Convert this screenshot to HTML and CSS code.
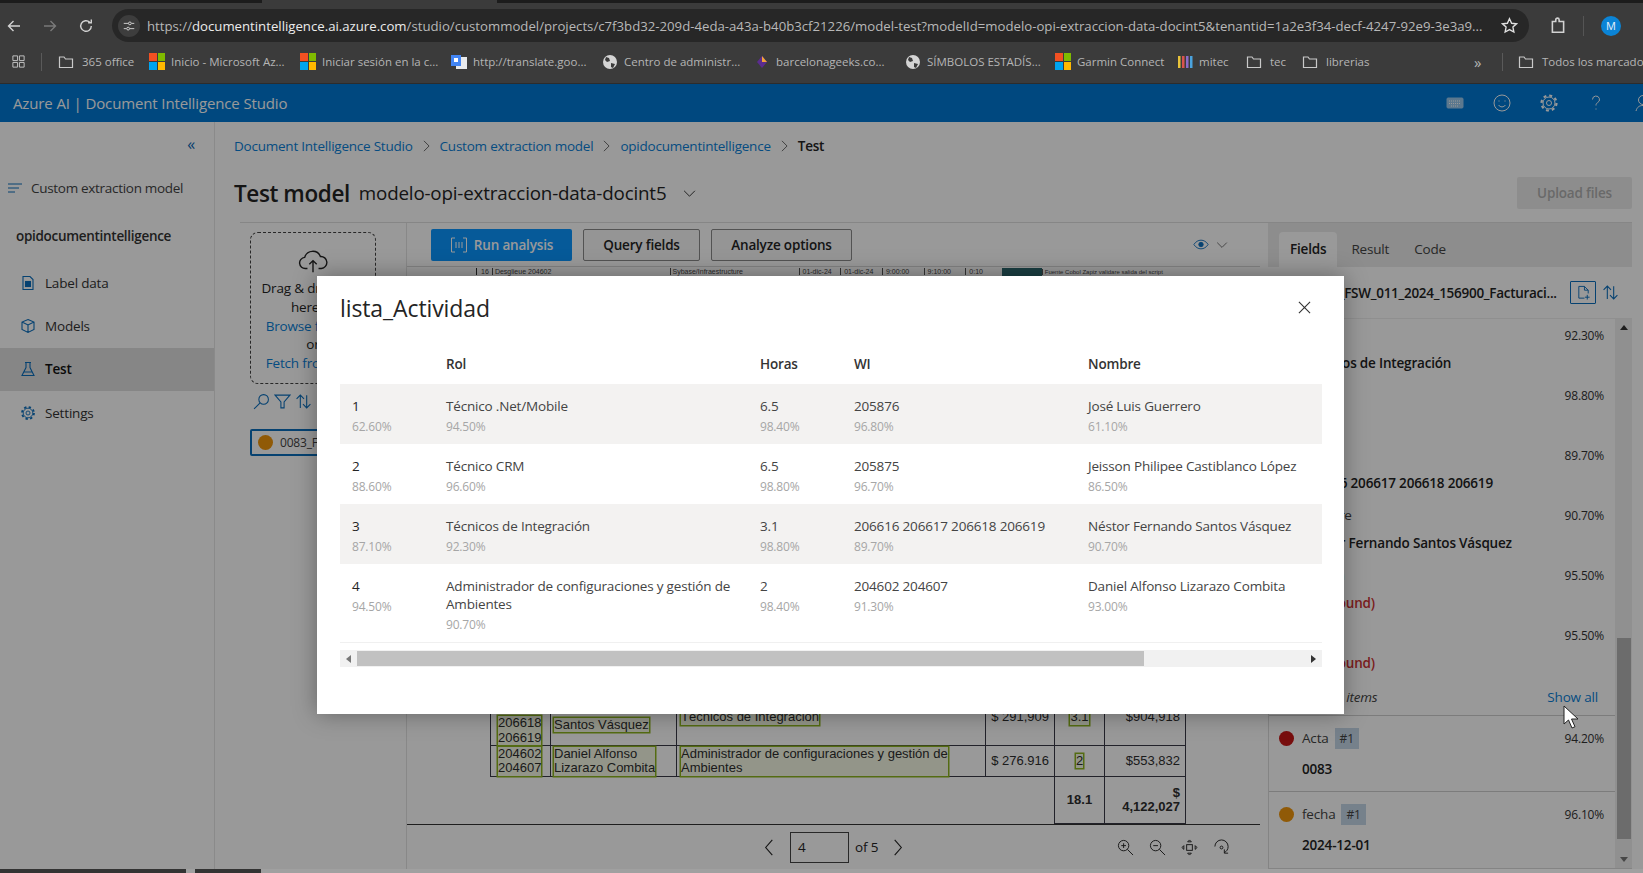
FILE: index.html
```html
<!DOCTYPE html>
<html lang="en">
<head>
  <meta charset="utf-8">
  <title>Azure AI | Document Intelligence Studio</title>
  <link rel="stylesheet" href="styles.css">
</head>
<body>
  <!-- browser window -->
  <div class="browser">
    <div class="tabstrip"><div class="tab"></div></div>
    <div class="toolbar">
      <svg class="tool-ico" viewBox="0 0 16 16"><path d="M14 8H2.500M7.500 3l-5 5 5 5"/></svg>
      <svg class="tool-ico tool-off" viewBox="0 0 16 16"><path d="M2 8h11.500M8.500 3l5 5-5 5"/></svg>
      <svg class="tool-ico" viewBox="0 0 16 16"><path d="M13.300 8a5.300 5.300 0 1 1-1.600-3.800M13.300 1.600v3.200h-3.200"/></svg>
      <div class="omnibox">
        <span class="site-info"><svg viewBox="0 0 16 16"><path d="M2 5h5M11 5h3M2 11h3M9 11h5"/><circle cx="9" cy="5" r="1.600"/><circle cx="7" cy="11" r="1.600"/></svg></span>
        <span class="url">https://<b>documentintelligence.ai.azure.com</b>/studio/custommodel/projects/c7f3bd32-209d-4eda-a43a-b40b3cf21226/model-test?modelId=modelo-opi-extraccion-data-docint5&amp;tenantid=1a2e3f34-decf-4247-92e9-3e3a9...</span>
        <svg class="star" viewBox="0 0 16 16"><path d="m8 1.600 2 4.300 4.600.5-3.400 3.100.9 4.600L8 11.800l-4.100 2.300.9-4.600-3.400-3.100L6 5.900z"/></svg>
      </div>
      <svg class="tool-ico ext" viewBox="0 0 16 16"><path d="M3 4h3V2.500a1.500 1.500 0 0 1 3 0V4h4v9.500H3z"/></svg>
      <span class="tool-sep"></span>
      <span class="avatar">M</span>
    </div>
    <div class="bookmarks">
      <svg class="bm-apps" viewBox="0 0 16 16"><path d="M2 2h5v5H2zM9 2h5v5H9zM2 9h5v5H2zM9 9h5v5H9z"/></svg>
      <span class="bm-sep"></span>
      <span class="bm bm-w1"><svg class="folder" viewBox="0 0 16 16"><path d="M1.500 3h4.500l1.500 2h7v8.500h-13z"/></svg>365 office</span>
      <span class="bm bm-w2"><span class="ms"><i></i><i></i><i></i><i></i></span>Inicio - Microsoft Az...</span>
      <span class="bm bm-w3"><span class="ms"><i></i><i></i><i></i><i></i></span>Iniciar sesión en la c...</span>
      <span class="bm bm-w4"><svg class="gt" viewBox="0 0 16 16"><rect x="5" y="3" width="11" height="12" fill="#e8eaed"/><rect y="1" width="10" height="11" fill="#4285f4"/><rect x="3" y="4" width="4" height="4" fill="#fff"/></svg>http://translate.goo...</span>
      <span class="bm bm-w5"><svg class="globe" viewBox="0 0 16 16"><circle cx="8" cy="8" r="7"/><path d="M4 3l3 1 1 3-3 1-2-2zM9 9l4 1-2 4-2-1z"/></svg>Centro de administr...</span>
      <span class="bm bm-w6"><svg class="gem" viewBox="0 0 16 16"><path d="M8 2l5 6-5 6-5-6z" fill="#5b2c8f"/><path d="M8 2l5 6H8z" fill="#f2a33a"/></svg>barcelonageeks.co...</span>
      <span class="bm bm-w7"><svg class="globe" viewBox="0 0 16 16"><circle cx="8" cy="8" r="7"/><path d="M4 3l3 1 1 3-3 1-2-2zM9 9l4 1-2 4-2-1z"/></svg>SÍMBOLOS ESTADÍS...</span>
      <span class="bm bm-w8"><span class="ms"><i></i><i></i><i></i><i></i></span>Garmin Connect</span>
      <span class="bm bm-w9"><svg class="bars" viewBox="0 0 16 16"><rect x="1" y="2" width="2.500" height="12" fill="#e8c33a"/><rect x="5" y="2" width="2.500" height="12" fill="#d9534f"/><rect x="9" y="2" width="2.500" height="12" fill="#8d6cc9"/><rect x="13" y="2" width="2.500" height="12" fill="#4aa3df"/></svg>mitec</span>
      <span class="bm bm-w10"><svg class="folder" viewBox="0 0 16 16"><path d="M1.500 3h4.500l1.500 2h7v8.500h-13z"/></svg>tec</span>
      <span class="bm bm-w11"><svg class="folder" viewBox="0 0 16 16"><path d="M1.500 3h4.500l1.500 2h7v8.500h-13z"/></svg>librerias</span>
      <span class="bm-more">»</span>
      <span class="bm-sep"></span>
      <span class="bm bm-all"><svg class="folder" viewBox="0 0 16 16"><path d="M1.500 3h4.500l1.500 2h7v8.500h-13z"/></svg>Todos los marcadores</span>
    </div>
  </div>

  <!-- studio page, dimmed by the dialog -->
  <div class="portal">
    <header class="appbar">
      <span class="appname">Azure AI | Document Intelligence Studio</span>
      <div class="appbar-icons">
        <svg viewBox="0 0 20 20"><rect x="2" y="5" width="16" height="10" rx="1" fill="currentColor" opacity=".6"/><path d="M4 8h12M4 10.500h12M6 13h8" stroke-dasharray="1 1"/></svg>
        <svg viewBox="0 0 20 20"><circle cx="10" cy="10" r="8"/><path d="M6.500 12c2 2.500 5 2.500 7 0M7 7.500v1M13 7.500v1"/></svg>
        <svg viewBox="0 0 20 20"><circle cx="10" cy="10" r="6"/><circle cx="10" cy="10" r="7.500" stroke-width="2.200" stroke-dasharray="2.950 2.940"/><circle cx="10" cy="10" r="2.500"/></svg>
        <svg viewBox="0 0 20 20"><path d="M6.500 6.500a3.500 3.500 0 1 1 5 3.200c-1 .6-1.500 1.200-1.500 2.800M10 15.500v1"/></svg>
        <svg viewBox="0 0 20 20"><circle cx="10" cy="7" r="4.500"/><path d="M3 18c1-4 3.500-5.500 7-5.500s6 1.500 7 5.500"/></svg>
      </div>
    </header>

    <div class="studio">
      <nav class="sidebar">
        <div class="collapse">«</div>
        <div class="side-model">
          <svg viewBox="0 0 16 16"><path d="M1 4h14M1 8h11M1 12h7"/></svg>
          Custom extraction model
        </div>
        <div class="side-project">opidocumentintelligence</div>
        <a class="side-link">
          <svg viewBox="0 0 16 16"><path d="M3 1.500h7l3 3v10H3z"/><rect x="5.500" y="6.500" width="5" height="5" fill="currentColor"/></svg>
          Label data
        </a>
        <a class="side-link">
          <svg viewBox="0 0 16 16"><path d="M8 1.500 14 4v7.500l-6 3-6-3V4zM2 4l6 3 6-3M8 7v7.500"/></svg>
          Models
        </a>
        <a class="side-link side-active">
          <svg viewBox="0 0 16 16"><path d="M5 1.500h6M6 1.500v5L2 14.500h12l-4-8v-5M4 11h8"/></svg>
          Test
        </a>
        <a class="side-link">
          <svg viewBox="0 0 20 20"><circle cx="10" cy="10" r="6"/><circle cx="10" cy="10" r="7.500" stroke-width="2.200" stroke-dasharray="2.950 2.940"/><circle cx="10" cy="10" r="2.500"/></svg>
          Settings
        </a>
      </nav>

      <main class="content">
        <div class="crumbs">
          <a>Document Intelligence Studio</a>
          <svg viewBox="0 0 10 14"><path d="m2 1 6 6-6 6"/></svg>
          <a>Custom extraction model</a>
          <svg viewBox="0 0 10 14"><path d="m2 1 6 6-6 6"/></svg>
          <a>opidocumentintelligence</a>
          <svg viewBox="0 0 10 14"><path d="m2 1 6 6-6 6"/></svg>
          <strong>Test</strong>
        </div>
        <div class="title-row">
          <h1>Test model</h1>
          <span class="model-name">modelo-opi-extraccion-data-docint5</span>
          <svg class="title-chev" viewBox="0 0 14 10"><path d="m1 2 6 6 6-6"/></svg>
          <button class="upload-btn">Upload files</button>
        </div>

        <div class="workspace">
          <section class="files">
            <div class="dropbox">
              <svg viewBox="0 0 32 26"><path d="M10 20H8a6 6 0 0 1-1-12 9 9 0 0 1 17-1 6.500 6.500 0 0 1 1 13h-3M16 24V12M12 15.500l4-4 4 4"/></svg>
              <p>Drag &amp; drop files<br>here to<br><a>Browse for files</a><br>or<br><a>Fetch from URL</a></p>
            </div>
            <div class="file-tools">
              <svg viewBox="0 0 16 16"><circle cx="10" cy="6" r="4.500"/><path d="M6.500 9.500 1 15"/></svg>
              <svg viewBox="0 0 16 16"><path d="M1 2h14l-5.500 6.500V14h-3V8.500z"/></svg>
              <svg viewBox="0 0 16 16"><path d="M5 14V2M1.500 5.500 5 2l3.500 3.500M11 2v12M7.500 10.500 11 14l3.500-3.500"/></svg>
            </div>
            <div class="file-card"><span class="dot dot-orange"></span>0083_FSW_011_2024</div>
          </section>

          <section class="viewer">
            <div class="viewer-bar">
              <button class="btn btn-primary">
                <svg viewBox="0 0 18 16"><path d="M5 1H1.500v14H5M13 1h3.500v14H13M6 5v6M9 5v6M12 5v6"/></svg>
                Run analysis
              </button>
              <button class="btn btn-query">Query fields</button>
              <button class="btn btn-options">Analyze options</button>
              <svg class="eye" viewBox="0 0 18 12"><path d="M1 6c4-6.500 12-6.500 16 0-4 6.500-12 6.500-16 0z"/><circle cx="9" cy="6" r="2.500" fill="currentColor"/></svg>
              <svg class="eye-chev" viewBox="0 0 14 10"><path d="m1 2 6 6 6-6"/></svg>
            </div>
            <div class="doc">
              <div class="doc-strip">
                <span class="strip-no">16</span>
                <span class="strip-a">Desglieue 204602</span>
                <span class="strip-b">Sybase/Infraestructure</span>
                <span class="strip-c">01-dic-24</span>
                <span class="strip-c">01-dic-24</span>
                <span class="strip-c">9:00:00</span>
                <span class="strip-c">9:10:00</span>
                <span class="strip-d">0:10</span>
                <span class="strip-e"></span>
                <span class="strip-f">Fuente Cobol Zapiz validare salida del script</span>
              </div>
              <table class="doc-table">
                <colgroup><col class="dc1"><col class="dc2"><col class="dc3"><col class="dc4"><col class="dc5"><col class="dc6"></colgroup>
                <tr class="doc-r3">
                  <td><mark>206618<br>206619</mark></td>
                  <td><mark>Santos Vásquez</mark></td>
                  <td><mark>Técnicos de Integración</mark></td>
                  <td class="num">$ 291,909</td>
                  <td class="mid"><mark>3.1</mark></td>
                  <td class="num">$904,918</td>
                </tr>
                <tr class="doc-r4">
                  <td><mark>204602<br>204607</mark></td>
                  <td><mark>Daniel Alfonso<br>Lizarazo Combita</mark></td>
                  <td><mark>Administrador de configuraciones y gestión de<br>Ambientes</mark></td>
                  <td class="num">$ 276.916</td>
                  <td class="mid"><mark>2</mark></td>
                  <td class="num">$553,832</td>
                </tr>
                <tr class="doc-total">
                  <td class="no-line" colspan="4"></td>
                  <td class="mid"><b>18.1</b></td>
                  <td class="num"><b>$<br>4,122,027</b></td>
                </tr>
              </table>
            </div>
            <div class="pager">
              <svg class="pg-chev" viewBox="0 0 10 18"><path d="M8.500 1 1.500 9l7 8"/></svg>
              <span class="pg-input">4</span>
              <span>of 5</span>
              <svg class="pg-chev pg-next" viewBox="0 0 10 18"><path d="m1.500 1 7 8-7 8"/></svg>
              <div class="pg-tools">
                <svg viewBox="0 0 18 18"><circle cx="7" cy="7" r="5.500"/><path d="m11 11 6 6M4.500 7h5M7 4.500v5"/></svg>
                <svg viewBox="0 0 18 18"><circle cx="7" cy="7" r="5.500"/><path d="m11 11 6 6M4.500 7h5"/></svg>
                <svg viewBox="0 0 18 18"><rect x="6" y="6" width="6" height="6"/><path d="m9 1-2 2h4zM9 17l-2-2h4zM1 9l2-2v4zM17 9l-2-2v4z"/></svg>
                <svg viewBox="0 0 18 18"><path d="M2 8a7 7 0 0 1 14 0c0 3-1.500 5-4 6.500M12 11v4h4"/><circle cx="9" cy="9" r="1.500"/></svg>
              </div>
            </div>
          </section>

          <aside class="results">
            <div class="tabs">
              <span class="tab-item tab-on">Fields</span>
              <span class="tab-item">Result</span>
              <span class="tab-item">Code</span>
            </div>
            <div class="result-file">
              <span class="result-name">0083_FSW_011_2024_156900_Facturaci...</span>
              <span class="doc-toggle"><svg viewBox="0 0 16 16"><path d="M9 14H3V1.500h6l4 4V9M9 1.500v4h4M12 10.500v5M9.500 13h5"/></svg></span>
              <svg class="result-sort" viewBox="0 0 16 16"><path d="M5 14V2M1.500 5.500 5 2l3.500 3.500M11 2v12M7.500 10.500 11 14l3.500-3.500"/></svg>
            </div>
            <div class="result-body">
              <div class="field-list">
                <div class="sub-field"><div class="f-head"><span>Rol</span><em>92.30%</em></div><b>Técnicos de Integración</b></div>
                <div class="sub-field"><div class="f-head"><span>Horas</span><em>98.80%</em></div><b>3.1</b></div>
                <div class="sub-field"><div class="f-head"><span>WI</span><em>89.70%</em></div><b>206616 206617 206618 206619</b></div>
                <div class="sub-field"><div class="f-head"><span>Nombre</span><em>90.70%</em></div><b>Néstor Fernando Santos Vásquez</b></div>
                <div class="sub-field"><div class="f-head"><span>Cuenta</span><em>95.50%</em></div><b class="missing">(Not found)</b></div>
                <div class="sub-field"><div class="f-head"><span>Total</span><em>95.50%</em></div><b class="missing">(Not found)</b></div>
                <div class="show-row"><i>Hide table items</i><a>Show all</a></div>
                <div class="field">
                  <div class="f-head"><span class="dot dot-red"></span><span>Acta</span><span class="tag">#1</span><em>94.20%</em></div>
                  <b>0083</b>
                </div>
                <div class="field">
                  <div class="f-head"><span class="dot dot-amber"></span><span>fecha</span><span class="tag">#1</span><em>96.10%</em></div>
                  <b>2024-12-01</b>
                </div>
              </div>
              <div class="result-scroll">
                <span class="arrow-up"></span>
                <span class="result-thumb"></span>
                <span class="arrow-down"></span>
              </div>
            </div>
          </aside>
        </div>
      </main>
    </div>

    <div class="backdrop"></div>

    <div class="modal">
      <div class="modal-head">
        <h2>lista_Actividad</h2>
        <svg class="modal-close" viewBox="0 0 14 14"><path d="m1 1 12 12M13 1 1 13"/></svg>
      </div>
      <div class="table-wrap">
        <table class="activity">
          <colgroup><col class="c1"><col class="c2"><col class="c3"><col class="c4"><col class="c5"></colgroup>
          <thead>
            <tr><th></th><th>Rol</th><th>Horas</th><th>WI</th><th>Nombre</th></tr>
          </thead>
          <tbody>
            <tr>
              <td class="idx">1<small>62.60%</small></td>
              <td>Técnico .Net/Mobile<small>94.50%</small></td>
              <td>6.5<small>98.40%</small></td>
              <td>205876<small>96.80%</small></td>
              <td>José Luis Guerrero<small>61.10%</small></td>
            </tr>
            <tr>
              <td class="idx">2<small>88.60%</small></td>
              <td>Técnico CRM<small>96.60%</small></td>
              <td>6.5<small>98.80%</small></td>
              <td>205875<small>96.70%</small></td>
              <td>Jeisson Philipee Castiblanco López<small>86.50%</small></td>
            </tr>
            <tr>
              <td class="idx">3<small>87.10%</small></td>
              <td>Técnicos de Integración<small>92.30%</small></td>
              <td>3.1<small>98.80%</small></td>
              <td>206616 206617 206618 206619<small>89.70%</small></td>
              <td>Néstor Fernando Santos Vásquez<small>90.70%</small></td>
            </tr>
            <tr>
              <td class="idx">4<small>94.50%</small></td>
              <td>Administrador de configuraciones y gestión de Ambientes<small>90.70%</small></td>
              <td>2<small>98.40%</small></td>
              <td>204602 204607<small>91.30%</small></td>
              <td>Daniel Alfonso Lizarazo Combita<small>93.00%</small></td>
            </tr>
          </tbody>
        </table>
      </div>
      <div class="hscroll">
        <span class="arrow-left"></span>
        <span class="hthumb"></span>
        <span class="arrow-right"></span>
      </div>
    </div>

    <svg class="cursor" viewBox="0 0 16 24"><path d="M1 1v18l4.500-4 3.500 8 3-1.300-3.500-7.700H15z"/></svg>
  </div>
  <div class="taskbar"><span class="task-a"></span><span class="task-b"></span></div>
</body>
</html>
```

FILE: styles.css
```css
* {
  box-sizing: border-box;
}

html, body {
  margin: 0;
  height: 873px;
  overflow: hidden;
}

body {
  display: flex;
  flex-direction: column;
  font-family: "Open Sans", "Noto Sans", sans-serif;
  font-size: 13.5px;
  letter-spacing: -.18px;
  color: #242424;
  background: #fff;
}

svg {
  fill: none;
  stroke: currentColor;
  flex: none;
}

a {
  color: #0a7fd8;
}

/* browser window */

.browser {
  height: 84px;
  flex: none;
  background: #3b3b3b;
  border-bottom: 1px solid #2c2c2c;
  color: #c9c9c9;
  letter-spacing: 0;
}

.tabstrip {
  height: 3px;
  background: #1c1c1c;
  padding-left: 262px;
}

.tab {
  width: 235px;
  height: 3px;
  background: #3b3b3b;
}

.toolbar {
  height: 39px;
  display: flex;
  align-items: center;
  padding: 6px 0 0 6px;
}

.tool-ico {
  width: 16px;
  height: 16px;
  margin-right: 20px;
  stroke: #d2d2d2;
  stroke-width: 1.4;
}

.tool-off {
  stroke: #7a7a7a;
}

.omnibox {
  width: 1417px;
  height: 33px;
  margin-left: -2px;
  border-radius: 17px;
  background: #272727;
  display: flex;
  align-items: center;
  padding-left: 6px;
}

.site-info {
  width: 22px;
  height: 22px;
  border-radius: 50%;
  background: #3d3d3d;
  display: flex;
  align-items: center;
  justify-content: center;
  margin-right: 7px;
}

.site-info svg {
  width: 14px;
  height: 14px;
  stroke: #dedede;
}

.url {
  width: 1340px;
  font-size: 13.2px;
  color: #b8b8b8;
  white-space: nowrap;
  overflow: hidden;
}

.url b {
  font-weight: 400;
  color: #ececec;
}

.star {
  width: 17px;
  height: 17px;
  margin-left: 14px;
  stroke: #e0e0e0;
  stroke-width: 1.3;
}

.ext {
  margin: 0 0 0 20px;
  width: 18px;
  height: 18px;
}

.tool-sep {
  width: 1px;
  height: 20px;
  margin-left: 16px;
  background: #555;
}

.avatar {
  width: 20px;
  height: 20px;
  margin-left: 17px;
  border-radius: 50%;
  background: #0b84d6;
  color: #e8f2fb;
  font-size: 11px;
  text-align: center;
  line-height: 20px;
}

.bookmarks {
  height: 39px;
  display: flex;
  align-items: center;
  padding-left: 11px;
  font-size: 11.5px;
  color: #b5b5b5;
  white-space: nowrap;
  overflow: hidden;
}

.bm-apps {
  width: 15px;
  height: 15px;
  stroke: #c6c6c6;
}

.bm-sep {
  width: 1px;
  height: 18px;
  flex: none;
  background: #5a5a5a;
  margin: 0 16px 0 15px;
}

.bm {
  display: flex;
  align-items: center;
  gap: 6px;
  flex: none;
}

.bm-w1 { width: 91px; }
.bm-w2 { width: 151px; }
.bm-w3 { width: 151px; }
.bm-w4 { width: 151px; }
.bm-w5 { width: 152px; }
.bm-w6 { width: 151px; }
.bm-w7 { width: 150px; }
.bm-w8 { width: 122px; }
.bm-w9 { width: 69px; }
.bm-w10 { width: 56px; }
.bm-w11 { width: 65px; }

.bm-more {
  margin-left: 107px;
  width: 9px;
  flex: none;
  font-size: 15px;
}

.bm-more + .bm-sep {
  margin: 0 15px 0 19px;
}

.folder {
  width: 16px;
  height: 16px;
  margin-right: 2px;
  stroke: #c9c9c9;
  stroke-width: 1.2;
}

.ms {
  width: 16px;
  height: 17px;
  display: grid;
  grid-template-columns: 1fr 1fr;
  gap: 1px;
  flex: none;
}

.ms i:nth-child(1) { background: #f25022; }
.ms i:nth-child(2) { background: #7fba00; }
.ms i:nth-child(3) { background: #00a4ef; }
.ms i:nth-child(4) { background: #ffb900; }

.gt, .gem, .bars {
  width: 16px;
  height: 16px;
  stroke: none;
}

.globe {
  width: 16px;
  height: 16px;
  stroke: none;
  fill: #d4d4d4;
}

.globe path {
  fill: #3b3b3b;
}

/* studio */

.portal {
  position: relative;
  flex: 1;
  display: flex;
  flex-direction: column;
  min-height: 0;
  overflow: hidden;
}

.appbar {
  height: 38px;
  flex: none;
  display: flex;
  align-items: center;
  padding-left: 13px;
  background: #0078d4;
  color: #fff;
}

.appname {
  font-size: 15px;
  letter-spacing: -.13px;
}

.appbar-icons {
  margin-left: auto;
  margin-right: -10px;
  display: flex;
  gap: 27px;
}

.appbar-icons svg {
  width: 20px;
  height: 20px;
  stroke-width: 1;
}

.studio {
  flex: 1;
  display: flex;
  min-height: 0;
}

.sidebar {
  width: 215px;
  flex: none;
  border-right: 1px solid #e6e6e6;
  padding-top: 12px;
}

.collapse {
  text-align: right;
  padding-right: 19px;
  height: 22px;
  font-size: 16px;
  line-height: 20px;
  color: #0b6ab8;
}

.side-model {
  display: flex;
  align-items: center;
  gap: 8px;
  height: 22px;
  margin-top: 21px;
  padding-left: 7px;
  letter-spacing: -.3px;
  color: #444;
}

.side-model svg {
  width: 16px;
  height: 16px;
  stroke: #0a6ebd;
}

.side-project {
  height: 22px;
  margin-top: 28px;
  padding-left: 16px;
  font-weight: 600;
  letter-spacing: -.3px;
  color: #333;
}

.side-link {
  display: flex;
  align-items: center;
  gap: 9px;
  height: 43.400px;
  padding-left: 20px;
  color: #333;
}

.side-project + .side-link {
  margin-top: 12px;
}

.side-link svg {
  width: 16px;
  height: 16px;
  color: #0a6ebd;
  stroke-width: 1.1;
}

.side-active {
  background: #e0e0e0;
  font-weight: 600;
  color: #111;
}

.content {
  flex: 1;
  min-width: 0;
  display: flex;
  flex-direction: column;
  padding-left: 19px;
  padding-right: 11px;
}

.crumbs {
  display: flex;
  align-items: center;
  gap: 9px;
  height: 20px;
  margin-top: 14px;
  letter-spacing: -.23px;
}

.crumbs svg {
  width: 9px;
  height: 12px;
  stroke: #555;
}

.crumbs strong {
  font-weight: 600;
}

.title-row {
  display: flex;
  align-items: center;
  height: 32px;
  margin-top: 21px;
}

h1 {
  margin: 0;
  font-size: 22.5px;
  font-weight: 600;
  letter-spacing: -.4px;
}

.model-name {
  margin-left: 9px;
  font-size: 18.8px;
}

.title-chev {
  width: 13px;
  height: 9px;
  margin-left: 17px;
}

.upload-btn {
  margin-left: auto;
  width: 115px;
  height: 32px;
  border: 0;
  border-radius: 2px;
  background: #ececec;
  color: #b0b0b0;
  font: 600 13.500px "Open Sans", sans-serif;
  letter-spacing: -.18px;
}

.workspace {
  flex: 1;
  min-height: 0;
  display: flex;
  margin-top: 13px;
  margin-left: 6px;
  border-top: 1px solid #e0e0e0;
}

.files {
  width: 167px;
  flex: none;
  border-right: 1px solid #e3e3e3;
  padding: 9px 0 0 10px;
}

.dropbox {
  width: 126px;
  height: 152px;
  border: 1px dashed #444;
  border-radius: 8px;
  text-align: center;
  padding-top: 17px;
}

.dropbox svg {
  width: 32px;
  height: 24px;
  color: #222;
  stroke-width: 1.5;
}

.dropbox p {
  margin: 1px 0 0;
  line-height: 18.800px;
  white-space: nowrap;
}

.file-tools {
  display: flex;
  gap: 4px;
  height: 20px;
  margin-top: 9px;
  padding-left: 3px;
  color: #0a6ebd;
}

.file-tools svg {
  width: 17px;
  height: 17px;
}

.file-card {
  width: 200px;
  height: 27px;
  margin-top: 16px;
  border: 2px solid #0a6ebd;
  border-radius: 2px;
  display: flex;
  align-items: center;
  gap: 7px;
  padding-left: 6px;
  font-size: 12px;
  color: #444;
}

.dot {
  width: 15px;
  height: 15px;
  border-radius: 50%;
  flex: none;
}

.dot-orange, .dot-amber {
  background: #f0960c;
}

.dot-red {
  background: #c81818;
}

.viewer {
  width: 853px;
  flex: none;
  display: flex;
  flex-direction: column;
}

.viewer-bar {
  height: 44px;
  flex: none;
  display: flex;
  align-items: center;
  gap: 11px;
  padding: 0 0 0 24px;
  border-bottom: 1px solid #d9d9d9;
}

.btn {
  height: 32px;
  border: 1px solid #8a8a8a;
  border-radius: 2px;
  background: #f8f8f8;
  color: #242424;
  font: 600 13.500px "Open Sans", sans-serif;
  letter-spacing: -.18px;
  display: flex;
  align-items: center;
  justify-content: center;
}

.btn-query {
  width: 117px;
}

.btn-options {
  width: 141px;
}

.btn-primary {
  width: 141px;
  gap: 6px;
  border: 0;
  background: #0a96ff;
  color: #fff;
}

.btn-primary svg {
  width: 18px;
  height: 16px;
}

.eye {
  width: 16px;
  height: 11px;
  margin-left: 330px;
  color: #0a6ebd;
}

.eye-chev {
  width: 12px;
  height: 8px;
  margin-left: -4px;
  color: #555;
}

.doc {
  flex: 1;
  min-height: 0;
  display: flex;
  flex-direction: column;
  justify-content: space-between;
  border-bottom: 1px solid #333;
  overflow: hidden;
}

.doc-strip {
  height: 9px;
  display: flex;
  align-items: center;
  padding-left: 69px;
  font: 7px "Liberation Sans", sans-serif;
  letter-spacing: 0;
  color: #444;
  white-space: nowrap;
}

.strip-no {
  width: 16px;
  border-left: 1px solid #333;
  padding-left: 4px;
}

.strip-a { width: 179px; padding-left: 2px; border-left: 1px solid #555; }
.strip-b { width: 130px; border-left: 1px solid #555; padding-left: 2px; }
.strip-c { width: 42px; border-left: 1px solid #555; padding-left: 3px; }
.strip-d { width: 37px; border-left: 1px solid #555; padding-left: 3px; }
.strip-e { width: 40px; height: 8px; background: #2e6a70; }
.strip-f { width: 220px; border-left: 1px solid #555; padding-left: 2px; font-size: 6px; }

.doc-table {
  margin-left: 83px;
  width: 695px;
  table-layout: fixed;
  border-collapse: collapse;
  font: 13px/14.500px "Liberation Sans", sans-serif;
  letter-spacing: 0;
  color: #2e2e2e;
}

.dc1 { width: 60px; }
.dc2 { width: 126px; }
.dc3 { width: 309px; }
.dc4 { width: 69px; }
.dc5 { width: 50px; }
.dc6 { width: 81px; }

.doc-table td {
  border: 1.5px solid #3a3a46;
  padding: 0 3px;
  vertical-align: middle;
}

.doc-table td:first-child {
  padding-left: 7px;
}

.doc-table td:nth-child(3) {
  padding-left: 4px;
}

.doc-r3 {
  height: 60px;
}

.doc-r3 td {
  vertical-align: bottom;
}

.doc-r3 td:nth-child(2) {
  padding-bottom: 13px;
}

.doc-r3 td:nth-child(3), .doc-r3 td:nth-child(4), .doc-r3 td:nth-child(5), .doc-r3 td:nth-child(6) {
  vertical-align: top;
  padding-top: 24px;
}

.doc-r4 {
  height: 31px;
}

.doc-total {
  height: 47px;
}

.doc-table .no-line {
  border: 0;
  border-top: 1.5px solid #3a3a46;
}

.doc-table .num {
  text-align: right;
  white-space: nowrap;
  padding-right: 5px;
}

.mid {
  text-align: center;
}

mark {
  display: inline-block;
  background: rgba(190, 215, 90, .16);
  box-shadow: 0 0 0 1.5px #8db41f;
  color: inherit;
}

.pager {
  height: 44px;
  flex: none;
  display: flex;
  align-items: center;
  padding-left: 356px;
  gap: 6px;
}

.pg-chev {
  width: 12px;
  height: 17px;
  margin-right: 9px;
  stroke-width: 1.2;
}

.pg-next {
  margin: 0 0 0 8px;
}

.pg-input {
  width: 59px;
  height: 31px;
  border: 1px solid #444;
  padding-left: 7px;
  line-height: 29px;
}

.pg-tools {
  display: flex;
  gap: 15px;
  margin-left: 207px;
}

.pg-tools svg {
  width: 17px;
  height: 17px;
}

.results {
  width: 364px;
  flex: none;
  margin-left: 8px;
  display: flex;
  flex-direction: column;
}

.tabs {
  height: 44px;
  flex: none;
  background: #ebebeb;
  display: flex;
  align-items: flex-end;
  padding-left: 11px;
}

.tab-item {
  height: 35px;
  padding: 8px 11px 0;
  color: #444;
}

.tab-item + .tab-item {
  margin-left: 3px;
}

.tab-on {
  background: #fff;
  border-radius: 4px 4px 0 0;
  font-weight: 600;
  color: #242424;
}

.result-file {
  height: 52px;
  flex: none;
  display: flex;
  align-items: center;
  border-bottom: 1px solid #eee;
  padding-left: 41px;
  font-weight: 600;
}

.result-name {
  width: 261px;
  letter-spacing: -.28px;
  white-space: nowrap;
  overflow: hidden;
}

.doc-toggle {
  width: 26px;
  height: 23px;
  border: 1px solid #0a6ebd;
  border-radius: 1px;
  display: flex;
  align-items: center;
  justify-content: center;
  color: #0a6ebd;
}

.doc-toggle svg {
  width: 15px;
  height: 15px;
}

.result-sort {
  width: 17px;
  height: 17px;
  margin-left: 6px;
  color: #0a6ebd;
}

.result-body {
  flex: 1;
  min-height: 0;
  display: flex;
  border-bottom: 1px solid #ddd;
}

.field-list {
  flex: 1;
  min-width: 0;
  border-left: 1px solid #ddd;
}

.sub-field {
  height: 60px;
  padding: 6px 11px 0 33px;
}

.f-head {
  display: flex;
  align-items: center;
  gap: 6px;
  height: 20px;
  color: #444;
}

.f-head em {
  margin-left: auto;
  font-style: normal;
  font-size: 12px;
  color: #333;
}

.sub-field b, .field b {
  display: block;
  margin-top: 9px;
  font-weight: 600;
  color: #222;
}

.sub-field .f-head span {
  letter-spacing: -.45px;
}

.missing {
  color: #c33 !important;
}

.show-row {
  height: 37px;
  display: flex;
  align-items: center;
  justify-content: space-between;
  padding: 0 17px 0 15px;
  border-bottom: 1px solid #cfcfcf;
  color: #444;
}

.field {
  height: 76px;
  padding: 12px 11px 0 10px;
  border-bottom: 1px solid #cfcfcf;
}

.field:last-child {
  border-bottom: 0;
}

.field b {
  margin: 12px 0 0 23px;
}

.field .dot {
  margin-right: 2px;
}

.tag {
  background: #c5d7e8;
  padding: 0 5px;
  height: 21px;
  line-height: 21px;
  font-size: 12px;
}

.result-scroll {
  width: 17px;
  flex: none;
  display: flex;
  flex-direction: column;
  align-items: center;
  background: #f0f0f0;
  position: relative;
}

.result-thumb {
  width: 14px;
  height: 201px;
  margin-top: 319px;
  background: #b5b5b5;
}

.arrow-up {
  position: absolute;
  top: 6px;
  border: 4px solid transparent;
  border-top: 0;
  border-bottom: 5px solid #333;
}

.arrow-down {
  position: absolute;
  bottom: 6px;
  border: 4px solid transparent;
  border-bottom: 0;
  border-top: 5px solid #777;
}

.taskbar {
  height: 4px;
  flex: none;
  background: #a0a0a0;
  display: flex;
  gap: 9px;
}

.task-a {
  width: 186px;
  background: #333;
}

.task-b {
  width: 66px;
  background: #333;
}

/* dialog */

.backdrop {
  position: absolute;
  inset: 0;
  background: rgba(0, 0, 0, .4);
}

.modal {
  position: absolute;
  left: 317px;
  top: 192px;
  width: 1027px;
  height: 438px;
  background: #fff;
  box-shadow: 0 0 22px rgba(0, 0, 0, .35);
  padding: 0 22px 0 23px;
}

.modal-head {
  height: 67px;
  display: flex;
  align-items: center;
  justify-content: space-between;
  padding-bottom: 3px;
}

h2 {
  margin: 0;
  font-size: 23px;
  font-weight: 400;
  letter-spacing: -.1px;
  color: #242424;
}

.modal-close {
  width: 13px;
  height: 13px;
  margin: -2px 11px 0 0;
  stroke: #333;
  stroke-width: 1.200;
}

.table-wrap {
  width: 982px;
  overflow: hidden;
}

.activity {
  width: 982px;
  table-layout: fixed;
  border-collapse: collapse;
  color: #444;
}

.c1 { width: 94px; }
.c2 { width: 314px; }
.c3 { width: 94px; }
.c4 { width: 234px; }
.c5 { width: 246px; }

.activity th {
  height: 41px;
  padding: 0 12px;
  text-align: left;
  font-weight: 600;
  color: #333;
}

.activity td {
  padding: 13px 4px 8px 12px;
  line-height: 18px;
  vertical-align: top;
}

.activity tbody tr:nth-child(odd) {
  background: #f3f2f1;
}

.activity tbody tr:last-child {
  border-bottom: 1px solid #f0f0f0;
}

.activity small {
  display: block;
  margin-top: 3px;
  font-size: 12px;
  color: #a6a6a6;
}

.activity .idx {
  color: #242424;
}

.hscroll {
  position: relative;
  width: 982px;
  height: 17px;
  margin-top: 7px;
  background: #f1f1f1;
  display: flex;
  align-items: center;
  padding-left: 17px;
}

.hthumb {
  width: 787px;
  height: 15px;
  background: #c1c1c1;
}

.arrow-left {
  position: absolute;
  left: 6px;
  border: 4px solid transparent;
  border-left: 0;
  border-right: 5px solid #777;
}

.arrow-right {
  position: absolute;
  right: 6px;
  border: 4px solid transparent;
  border-right: 0;
  border-left: 5px solid #333;
}

.cursor {
  position: absolute;
  left: 1563px;
  top: 621px;
  width: 16px;
  height: 24px;
  fill: #fff;
  stroke: #222;
  stroke-width: 1;
}
```
